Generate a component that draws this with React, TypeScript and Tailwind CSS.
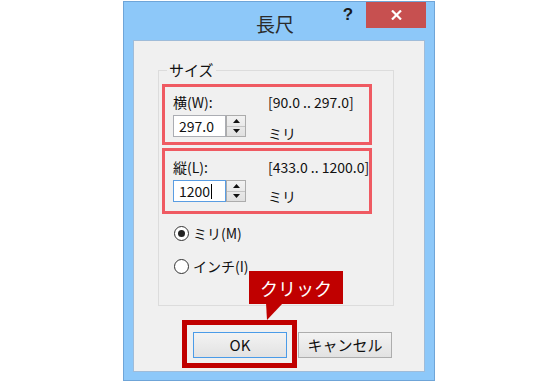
import React from "react";

function Spinner({ value, focused, caret }: { value: string; focused?: boolean; caret?: boolean }) {
  return (
    <div className="flex h-[22px]">
      <div
        className={
          "w-[53px] h-[22px] bg-white border flex items-center pl-[5px] text-[14px] leading-[18px] " +
          (focused ? "border-[#5a9de2]" : "border-[#abadb3]")
        }
      >
        <span>{value}</span>
        {caret ? <span className="inline-block w-[1px] h-[15px] bg-black ml-[1px]" /> : null}
      </div>
      <div className="w-[20px] h-[22px] border border-[#acacac] bg-gradient-to-b from-[#f2f2f2] to-[#e0e0e0] flex flex-col">
        <div className="flex-1 flex items-center justify-center border-b border-[#c4c4c4]">
          <svg width="7" height="4" viewBox="0 0 7 4">
            <polygon points="3.5,0 7,4 0,4" fill="#111" />
          </svg>
        </div>
        <div className="flex-1 flex items-center justify-center">
          <svg width="7" height="4" viewBox="0 0 7 4">
            <polygon points="0,0 7,0 3.5,4" fill="#111" />
          </svg>
        </div>
      </div>
    </div>
  );
}

export default function App() {
  return (
    <div className="w-[547px] h-[383px] bg-white pl-[123px] pt-[1px] overflow-hidden text-[#111] font-['Noto_Sans_CJK_JP','Noto_Sans',sans-serif]">
      <div className="w-[312px] h-[380px] border border-[#6fa5d8] bg-[#8dc8f9] flex flex-col">
        {/* title bar */}
        <div className="h-[38px] flex items-start">
          <div className="flex-1" />
          <div className="pt-[10px] text-[19px] leading-[24px] text-[#2b2b2b]">長尺</div>
          <div className="flex-1 flex justify-end items-start pr-[8px]">
            <div className="w-[26px] h-[26px] flex items-center justify-center text-[17px] font-bold text-[#1a1a1a] font-['Liberation_Sans',sans-serif]">
              ?
            </div>
            <div className="ml-[5px] w-[60px] h-[26px] bg-[#c75050] flex items-center justify-center">
              <svg width="11" height="10" viewBox="0 0 11 10">
                <path d="M1 0.5 L10 9.5 M10 0.5 L1 9.5" stroke="#fff" strokeWidth="2.2" />
              </svg>
            </div>
          </div>
        </div>

        {/* client area */}
        <div className="mx-[9px] h-[332px] border border-[#9fbcd9] bg-[#f0f0f0] relative flex flex-col">
          {/* group box */}
          <div className="ml-[24px] mt-[29px] w-[236px] h-[236px] border border-[#dcdcdc] relative flex flex-col">
            <span className="absolute left-[8px] top-[-10px] px-[2px] bg-[#f0f0f0] text-[15px] leading-[18px]">
              サイズ
            </span>

            {/* width */}
            <div className="ml-[3px] mt-[13px] w-[210px] h-[61px] border-[3px] border-[#ef5a62] pl-[8px] pt-[6px] flex flex-col">
              <div className="flex text-[14px] leading-[18px] whitespace-nowrap">
                <span className="w-[95px] shrink-0">横(W):</span>
                <span>[90.0 .. 297.0]</span>
              </div>
              <div className="flex mt-[4px]">
                <div className="w-[95px] shrink-0">
                  <Spinner value="297.0" />
                </div>
                <span className="mt-[9px] text-[14px] leading-[18px]">ミリ</span>
              </div>
            </div>

            {/* length */}
            <div className="ml-[3px] mt-[3px] w-[210px] h-[66px] border-[3px] border-[#ef5a62] pl-[8px] pt-[7px] flex flex-col">
              <div className="flex text-[14px] leading-[18px] whitespace-nowrap">
                <span className="w-[95px] shrink-0">縦(L):</span>
                <span>[433.0 .. 1200.0]</span>
              </div>
              <div className="flex mt-[4px]">
                <div className="w-[95px] shrink-0">
                  <Spinner value="1200" focused caret />
                </div>
                <span className="mt-[7px] text-[14px] leading-[18px]">ミリ</span>
              </div>
            </div>

            {/* radios */}
            <div className="ml-[15px] mt-[10px] flex items-center h-[18px]">
              <div className="w-[15px] h-[15px] rounded-full border border-[#333] bg-white flex items-center justify-center">
                <div className="w-[7px] h-[7px] rounded-full bg-[#222]" />
              </div>
              <span className="ml-[4px] text-[14px] leading-[18px]">ミリ(M)</span>
            </div>
            <div className="ml-[15px] mt-[15px] flex items-center h-[18px]">
              <div className="w-[15px] h-[15px] rounded-full border border-[#333] bg-white" />
              <span className="ml-[4px] text-[14px] leading-[18px]">インチ(I)</span>
            </div>
          </div>

          {/* buttons */}
          <div className="ml-[48px] mt-[14px] flex items-start">
            <div className="w-[115px] h-[48px] border-[5px] border-[#c00000] pl-[6px] pt-[7px]">
              <div className="w-[94px] h-[26px] border border-[#4a9be8] bg-gradient-to-b from-[#f3f3f3] to-[#e2e2e2] flex items-center justify-center text-[15px] leading-[18px]">
                OK
              </div>
            </div>
            <div className="ml-[1px] mt-[12px] w-[94px] h-[26px] border border-[#adadad] bg-gradient-to-b from-[#f3f3f3] to-[#e2e2e2] flex items-center justify-center text-[15px] leading-[18px]">
              キャンセル
            </div>
          </div>

          {/* callout */}
          <div className="absolute left-[115px] top-[230px] w-[94px] h-[33px] bg-[#c00000] flex items-center justify-center text-white text-[18px] leading-[22px]">
            クリック
            <svg className="absolute left-[17px] top-[32px]" width="18" height="18" viewBox="0 0 18 18">
              <polygon points="0,0 17,0 1,17" fill="#c00000" />
            </svg>
          </div>
        </div>
      </div>
    </div>
  );
}
